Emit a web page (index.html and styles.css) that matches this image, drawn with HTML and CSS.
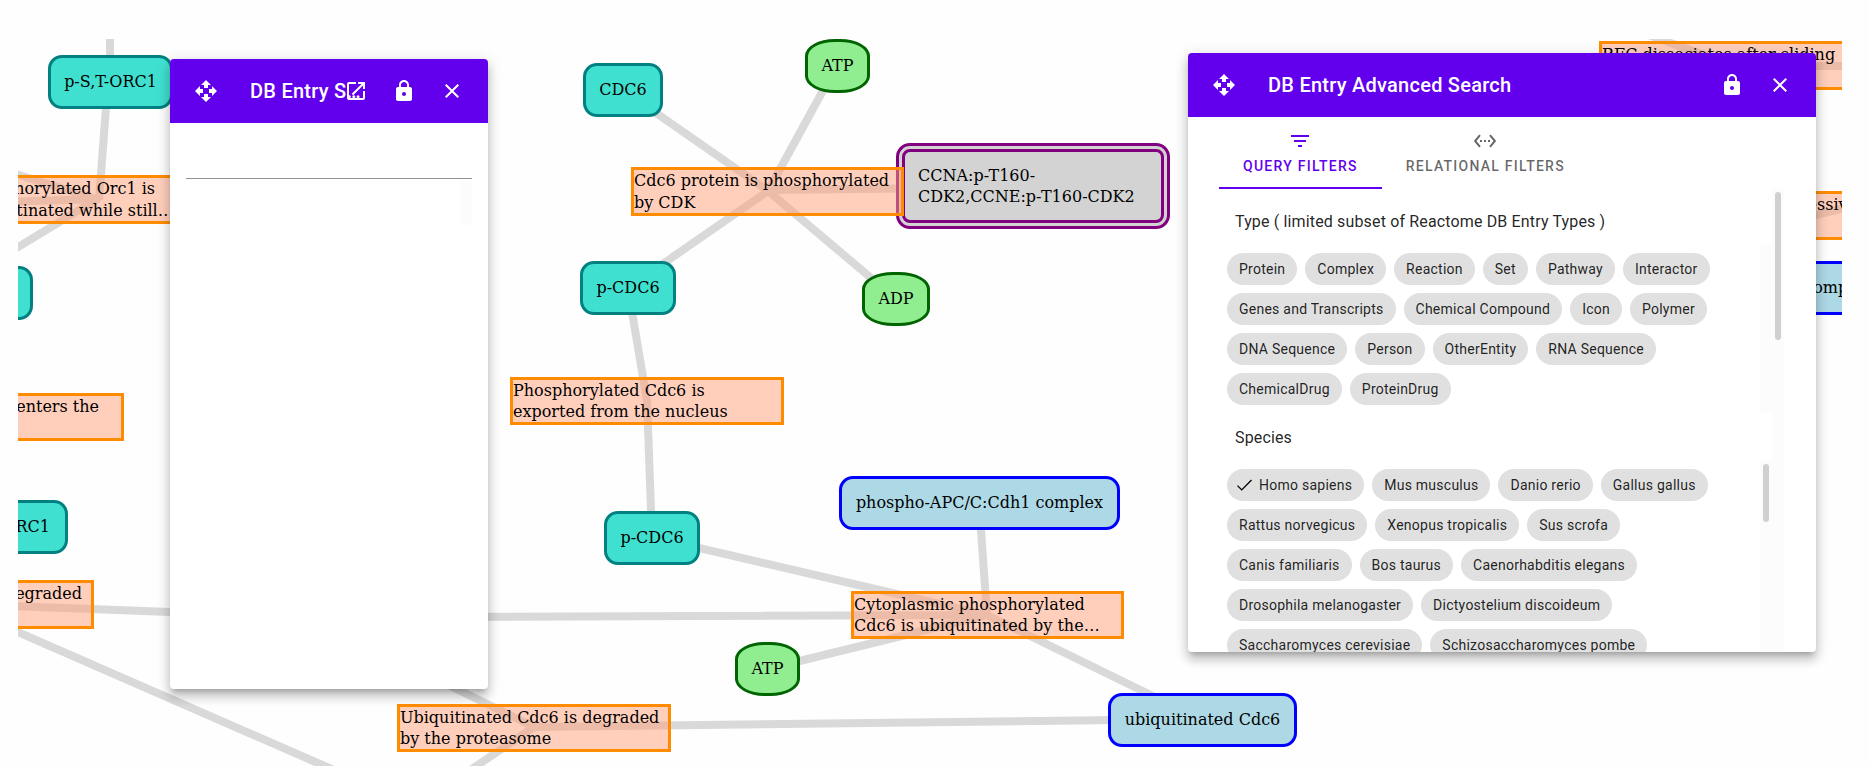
FILE: index.html
```html
<!DOCTYPE html>
<html lang="en">
<head>
<meta charset="utf-8">
<title>DB Entry Search</title>
<link rel="stylesheet" href="styles.css">
</head>
<body>
<svg class="icon-defs" aria-hidden="true">
  <symbol id="i-move" viewBox="0 0 24 24"><path d="M10 9h4V6h3l-5-5-5 5h3v3zm-1 1H6V7l-5 5 5 5v-3h3v-4zm14 2l-5-5v3h-3v4h3v3l5-5zm-9 3h-4v3H7l5 5 5-5h-3v-3z"/></symbol>
  <symbol id="i-open" viewBox="0 0 24 24"><path d="M19 19H5V5h7V3H5c-1.11 0-2 .9-2 2v14c0 1.1.89 2 2 2h14c1.1 0 2-.9 2-2v-7h-2v7zM14 3v2h3.59l-9.83 9.83 1.41 1.41L19 6.41V10h2V3h-7z"/></symbol>
  <symbol id="i-lock" viewBox="0 0 24 24"><path d="M18 8h-1V6c0-2.76-2.24-5-5-5S7 3.24 7 6v2H6c-1.1 0-2 .9-2 2v10c0 1.1.9 2 2 2h12c1.1 0 2-.9 2-2V10c0-1.1-.9-2-2-2zm-6 9c-1.1 0-2-.9-2-2s.9-2 2-2 2 .9 2 2-.9 2-2 2zm3.1-9H8.9V6c0-1.71 1.39-3.1 3.1-3.1 1.71 0 3.1 1.39 3.1 3.1v2z"/></symbol>
  <symbol id="i-close" viewBox="0 0 24 24"><path d="M19 6.41L17.59 5 12 10.59 6.41 5 5 6.41 10.59 12 5 17.59 6.41 19 12 13.41 17.59 19 19 17.59 13.41 12z"/></symbol>
  <symbol id="i-filter" viewBox="0 0 24 24"><path d="M10 18h4v-2h-4v2zM3 6v2h18V6H3zm3 7h12v-2H6v2z"/></symbol>
  <symbol id="i-relation" viewBox="0 0 24 24"><path d="M7.77 6.76L6.23 5.48.82 12l5.41 6.52 1.54-1.28L3.42 12l4.35-5.24zM7 13h2v-2H7v2zm10-2h-2v2h2v-2zm-6 2h2v-2h-2v2zm6.77-7.52l-1.54 1.28L20.58 12l-4.35 5.24 1.54 1.28L23.18 12l-5.41-6.52z"/></symbol>
</svg>

<main class="canvas">
  <div class="world">
    <svg class="edges" width="1869" height="780" aria-hidden="true">
      <path d="M110 39V81M108 81L99 200M0 169L99 200M0 202L99 199M0 258L99 198"/>
      <path d="M-42 604L170 612M-42 606L336 771"/>
      <path d="M623 90L768 191L896 299M837 65L768 191M628 288L768 191M1033 187L768 190"/>
      <path d="M628 288L647 401L652 537L987 615M979 502L987 615L1202 720M767 669L987 615M400 617L987 615"/>
      <path d="M414 668L534 727L469 771M534 727L1202 719"/>
      <path d="M1640 32L1735 66H1869M1735 235L1869 202"/>
    </svg>

    <div class="node protein n-storc1">p-S,T-ORC1</div>
    <div class="node protein n-left"></div>
    <div class="node protein cut n-orc1">ORC1</div>
    <div class="node protein n-cdc6">CDC6</div>
    <div class="node protein n-pcdc6-a">p-CDC6</div>
    <div class="node protein n-pcdc6-b">p-CDC6</div>
    <div class="node chemical n-atp-a">ATP</div>
    <div class="node chemical n-adp">ADP</div>
    <div class="node chemical n-atp-b">ATP</div>
    <div class="node complex n-apc">phospho-APC/C:Cdh1 complex</div>
    <div class="node complex n-ubi">ubiquitinated Cdc6</div>
    <div class="node complex n-right">complex</div>
    <div class="node set n-ccna">CCNA:p-T160-<br>CDK2,CCNE:p-T160-CDK2</div>

    <div class="reaction r-orc1">Phosphorylated Orc1 is<br>ubiquitinated while still…</div>
    <div class="reaction low cut r-enters">enters the</div>
    <div class="reaction cut r-degraded">degraded</div>
    <div class="reaction r-cdk">Cdc6 protein is phosphorylated<br>by CDK</div>
    <div class="reaction low r-export">Phosphorylated Cdc6 is<br>exported from the nucleus</div>
    <div class="reaction low r-cyto">Cytoplasmic phosphorylated<br>Cdc6 is ubiquitinated by the…</div>
    <div class="reaction low r-proteasome">Ubiquitinated Cdc6 is degraded<br>by the proteasome</div>
    <div class="reaction r-rfc">RFC dissociates after sliding</div>
    <div class="reaction r-processive">processive</div>
  </div>
</main>

<section class="window window-search">
  <header class="bar">
    <button class="icon-button" aria-label="Move"><svg><use href="#i-move"/></svg></button>
    <h2 class="title title-tight">DB Entry Search</h2>
    <button class="icon-button" aria-label="Open"><svg><use href="#i-open"/></svg></button>
    <button class="icon-button" aria-label="Lock"><svg><use href="#i-lock"/></svg></button>
    <button class="icon-button" aria-label="Close"><svg><use href="#i-close"/></svg></button>
  </header>
  <div class="search-body">
    <input class="field" type="text" aria-label="Search">
    <div class="track track-short"></div>
  </div>
</section>

<section class="window window-advanced">
  <header class="bar">
    <button class="icon-button" aria-label="Move"><svg><use href="#i-move"/></svg></button>
    <h2 class="title">DB Entry Advanced Search</h2>
    <button class="icon-button" aria-label="Lock"><svg><use href="#i-lock"/></svg></button>
    <button class="icon-button" aria-label="Close"><svg><use href="#i-close"/></svg></button>
  </header>
  <div class="advanced-body">
    <div class="tabs" role="tablist">
      <button class="tab active" role="tab" aria-selected="true"><svg><use href="#i-filter"/></svg>Query Filters</button>
      <button class="tab" role="tab" aria-selected="false"><svg><use href="#i-relation"/></svg>Relational Filters</button>
    </div>
    <div class="scroller">
      <div class="filters">
        <h3 class="group-title">Type ( limited subset of Reactome DB Entry Types )</h3>
        <div class="group">
          <div class="chips">
            <button class="chip">Protein</button>
            <button class="chip">Complex</button>
            <button class="chip">Reaction</button>
            <button class="chip">Set</button>
            <button class="chip">Pathway</button>
            <button class="chip">Interactor</button>
            <button class="chip">Genes and Transcripts</button>
            <button class="chip">Chemical Compound</button>
            <button class="chip">Icon</button>
            <button class="chip">Polymer</button>
            <button class="chip">DNA Sequence</button>
            <button class="chip">Person</button>
            <button class="chip">OtherEntity</button>
            <button class="chip">RNA Sequence</button>
            <button class="chip">ChemicalDrug</button>
            <button class="chip">ProteinDrug</button>
          </div>
          <div class="track"></div>
        </div>
        <h3 class="group-title">Species</h3>
        <div class="group">
          <div class="chips">
            <button class="chip" aria-pressed="true"><svg class="check" viewBox="-2 -3 30 30"><path d="M1.73 12.91L8.1 19.28 22.79 4.59"/></svg>Homo sapiens</button>
            <button class="chip">Mus musculus</button>
            <button class="chip">Danio rerio</button>
            <button class="chip">Gallus gallus</button>
            <button class="chip">Rattus norvegicus</button>
            <button class="chip">Xenopus tropicalis</button>
            <button class="chip">Sus scrofa</button>
            <button class="chip">Canis familiaris</button>
            <button class="chip">Bos taurus</button>
            <button class="chip">Caenorhabditis elegans</button>
            <button class="chip">Drosophila melanogaster</button>
            <button class="chip">Dictyostelium discoideum</button>
            <button class="chip">Saccharomyces cerevisiae</button>
            <button class="chip">Schizosaccharomyces pombe</button>
          </div>
          <div class="track"><div class="thumb thumb-species"></div></div>
        </div>
      </div>
      <div class="track"><div class="thumb thumb-page"></div></div>
    </div>
  </div>
</section>
</body>
</html>
```
FILE: styles.css
```css
* { box-sizing: border-box; }

body {
  margin: 0;
  height: 100vh;
  padding: 39px 27px 0 18px;
  overflow: hidden;
  background: #fefefe;
  font-family: Roboto, "Liberation Sans", sans-serif;
}

.icon-defs { position: absolute; width: 0; height: 0; }

button { border: 0; margin: 0; font: inherit; background: none; }

/* Pathway graph */
.canvas { position: relative; height: 100%; overflow: hidden; }

.world {
  position: absolute;
  left: -18px;
  top: -39px;
  color: #000;
  font: 16px/22px "DejaVu Serif", serif;
  white-space: nowrap;
}

.edges {
  position: absolute;
  left: 0;
  top: 0;
  overflow: visible;
  fill: none;
  stroke: #d9d9d9;
  stroke-width: 8;
}

.node, .reaction { position: absolute; }

.node {
  display: flex;
  align-items: center;
  justify-content: center;
  height: 54px;
  border: 3px solid;
  border-radius: 14px;
}

.node.protein { background: #40e0d0; border-color: #008080; }
.node.chemical { background: #90ee90; border-color: #006400; border-radius: 46% / 17px; }
.node.complex { background: #add8e6; border-color: #0000ff; }
.node.set {
  height: 86px;
  padding-left: 13px;
  justify-content: flex-start;
  line-height: 21px;
  background: #d3d3d3;
  border: 9px double #800080;
}
.node.protein, .node.chemical, .node.complex, .node.set { color: #000; }

.reaction {
  width: 273px;
  height: 49px;
  border: 3px solid #ff8c00;
  background: rgba(255, 160, 122, 0.5);
}
.reaction.low { height: 48px; line-height: 21px; }

.node.cut { justify-content: flex-end; padding-right: 15px; }
.reaction.cut { text-align: right; }

.n-storc1 { left: 48px; top: 55px; width: 125px; }
.n-left { left: -62px; top: 266px; width: 95px; }
.n-orc1 { left: -30px; top: 500px; width: 98px; }
.n-cdc6 { left: 583px; top: 63px; width: 80px; }
.n-pcdc6-a { left: 580px; top: 261px; width: 96px; }
.n-pcdc6-b { left: 604px; top: 511px; width: 96px; }
.n-atp-a { left: 805px; top: 39px; width: 65px; }
.n-adp { left: 862px; top: 272px; width: 68px; }
.n-atp-b { left: 735px; top: 642px; width: 65px; }
.n-apc { left: 839px; top: 476px; width: 281px; }
.n-ubi { left: 1108px; top: 693px; width: 189px; }
.n-right { left: 1790px; top: 261px; width: 96px; }
.n-ccna { left: 896px; top: 143px; width: 274px; }

.r-orc1 { left: -38px; top: 175px; }
.r-enters { left: -149px; top: 393px; padding-right: 22px; }
.r-degraded { left: -179px; top: 580px; padding-right: 9px; }
.r-cdk { left: 631px; top: 167px; }
.r-export { left: 510px; top: 377px; width: 274px; }
.r-cyto { left: 851px; top: 591px; }
.r-proteasome { left: 397px; top: 704px; width: 274px; }
.r-rfc { left: 1599px; top: 41px; width: 274px; }
.r-processive { left: 1768px; top: 191px; }

/* Floating windows */
.window {
  position: absolute;
  display: flex;
  flex-direction: column;
  overflow: hidden;
  border-radius: 4px;
  background: #fff;
  color: rgba(0, 0, 0, 0.87);
  box-shadow: 0 5px 5px -3px rgba(0, 0, 0, 0.2), 0 8px 10px 1px rgba(0, 0, 0, 0.14), 0 3px 14px 2px rgba(0, 0, 0, 0.12);
}
.window-search { left: 170px; top: 59px; bottom: 77px; width: 318px; }
.window-advanced { right: 53px; top: 53px; bottom: 114px; width: 628px; }

.bar {
  display: flex;
  flex: none;
  align-items: center;
  height: 64px;
  padding: 0 12px;
  background: #6200ee;
  color: #fff;
}

.icon-button { flex: none; width: 48px; height: 48px; padding: 12px; color: inherit; }
.icon-button svg, .tab svg { display: block; width: 24px; height: 24px; fill: currentColor; }

.title {
  flex: 1;
  min-width: 0;
  margin: 0;
  padding-left: 20px;
  overflow: hidden;
  font-size: 20px;
  font-weight: 500;
  line-height: 32px;
  letter-spacing: 0.25px;
  text-overflow: ellipsis;
  white-space: nowrap;
}
.title-tight { margin-right: -29px; }

.search-body { padding: 0 16px; }
.field {
  display: block;
  width: 100%;
  height: 56px;
  padding: 0 16px;
  border: 0;
  border-bottom: 1px solid #919191;
  background: none;
  font: 16px Roboto, sans-serif;
  outline: none;
}

.track { flex: none; width: 12px; padding: 3px; background: #fcfcfc; }
.track-short { height: 44px; margin: 2px 0 0 auto; }
.thumb { width: 6px; border-radius: 3px; background: #cfd0d2; }
.thumb-page { height: 148px; }
.thumb-species { height: 58px; }

.advanced-body {
  display: flex;
  flex-direction: column;
  flex: 1;
  min-height: 0;
  padding: 0 32px 0 31px;
}

.tabs { display: flex; flex: none; }
.tab {
  display: flex;
  flex-direction: column;
  align-items: center;
  height: 72px;
  padding: 12px 24px 0;
  border-bottom: 2px solid transparent;
  color: rgba(0, 0, 0, 0.6);
  font-size: 14px;
  font-weight: 500;
  line-height: 26px;
  letter-spacing: 1.25px;
  text-transform: uppercase;
}
.tab.active { color: #6200ee; border-color: #6200ee; }

.scroller { display: flex; flex: 1; min-height: 0; padding-top: 8px; overflow: hidden; }
.scroller > .track { margin-top: -8px; }
.filters { flex: 1; min-width: 0; }
.group-title {
  margin: 0;
  padding: 13px 16px 11px;
  font-size: 16px;
  font-weight: 400;
  line-height: 24px;
  letter-spacing: 0.15px;
}
.group { display: flex; }
.chips { display: flex; flex: 1; flex-wrap: wrap; align-content: flex-start; gap: 8px; padding: 8px; }
.chip {
  display: flex;
  align-items: center;
  height: 32px;
  padding: 0 12px;
  border-radius: 16px;
  background: #e0e0e0;
  color: rgba(0, 0, 0, 0.87);
  font-size: 14px;
  line-height: 20px;
  letter-spacing: 0.25px;
}
.check { width: 20px; height: 20px; margin: 0 4px 0 -4px; fill: none; stroke: #000; stroke-width: 2; }
```
